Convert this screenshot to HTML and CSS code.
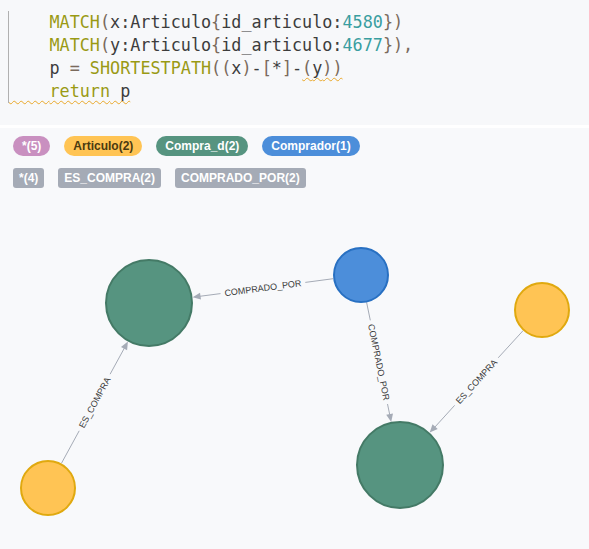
FILE: index.html
```html
<!DOCTYPE html>
<html lang="en">
<head>
  <meta charset="UTF-8" />
  <title>Query result</title>
  <link rel="stylesheet" href="styles.css">
</head>
<body>
  <div class="editor">
<pre class="code"><span class="sp">    </span><span class="kw">MATCH</span><span class="pn">(</span>x:Articulo<span class="pn">{</span>id_articulo:<span class="num">4580</span><span class="pn">})</span>
<span class="sp">    </span><span class="kw">MATCH</span><span class="pn">(</span>y:Articulo<span class="pn">{</span>id_articulo:<span class="num">4677</span><span class="pn">}),</span>
<span class="sp">    </span>p <span class="op">=</span> <span class="kw">SHORTESTPATH</span><span class="pn">((</span>x<span class="pn">)</span>-<span class="pn">[</span>*<span class="pn">]</span>-<span class="warn"><span class="pn">(</span>y<span class="pn">))</span></span>
<span class="warn"><span class="sp">    </span><span class="kw">return</span> p</span></pre>
  </div>

  <div class="legend">
    <div class="legend-row">
      <span class="pill pink">*(5)</span>
      <span class="pill yellow">Articulo(2)</span>
      <span class="pill green">Compra_d(2)</span>
      <span class="pill blue">Comprador(1)</span>
    </div>
    <div class="legend-row">
      <span class="tag">*(4)</span>
      <span class="tag">ES_COMPRA(2)</span>
      <span class="tag">COMPRADO_POR(2)</span>
    </div>
  </div>

  <div class="graph">
    <svg width="589" height="353" viewBox="0 196 589 353">
      <g class="rel">
        <line x1="333.2" y1="280.7" x2="305.3" y2="284.4" />
        <line x1="220.5" y1="295.6" x2="199" y2="298.4" />
        <polygon points="192.6,299.2 200.0,294.7 201.0,301.6" />
        <text x="262.9" y="290" dy="0.35em" transform="rotate(-7.5 262.9 290)">COMPRADO_POR</text>

        <line x1="366.6" y1="304.4" x2="370.3" y2="322.3" />
        <line x1="387.5" y1="406" x2="389.9" y2="417.5" />
        <polygon points="391.2,423.9 386.2,416.8 393.0,415.4" />
        <text x="378.9" y="364.2" dy="0.35em" transform="rotate(78.4 378.9 364.2)">COMPRADO_POR</text>

        <line x1="523.1" y1="332.6" x2="498.2" y2="359.8" />
        <line x1="454.6" y1="407.4" x2="434.5" y2="429.5" />
        <polygon points="429.7,434.6 432.5,426.3 437.7,431.1" />
        <text x="476.4" y="383.6" dy="0.35em" transform="rotate(-47.5 476.4 383.6)">ES_COMPRA</text>

        <line x1="61.4" y1="465.4" x2="79.2" y2="432.8" />
        <line x1="110.1" y1="376.2" x2="124.8" y2="349.3" />
        <polygon points="127.9,343.6 127.1,352.3 121.0,348.9" />
        <text x="94.7" y="404.5" dy="0.35em" transform="rotate(-61.4 94.7 404.5)">ES_COMPRA</text>
      </g>
      <circle class="node n-green" cx="149" cy="305" r="43" />
      <circle class="node n-blue" cx="361" cy="277" r="27" />
      <circle class="node n-yellow" cx="542" cy="312" r="27" />
      <circle class="node n-green" cx="400" cy="467" r="43" />
      <circle class="node n-yellow" cx="48" cy="490" r="27" />
    </svg>
  </div>
</body>
</html>
```

FILE: styles.css
```css
body { margin: 0; background: #f8f9fb; font-family: "Liberation Sans", Arial, sans-serif; color: #333; overflow: hidden; }

.editor { background: #f7f8fa; height: 125px; border-bottom: 3px solid #fff; overflow: hidden; }
.code {
  margin: 11px 0 0 8px;
  padding: 0;
  border-left: 1px solid #b0b0b0;
  font-family: "DejaVu Sans Mono", "Liberation Mono", monospace;
  font-size: 16.8px;
  line-height: 23px;
  color: #3d3d3d;
  width: 400px;
}
.kw { color: #9a9a14; }
.pn { color: #7a6a5c; }
.op { color: #7a6a5c; }
.num { color: #3a9ea0; }
.warn { text-decoration: underline wavy #e9a82a; text-decoration-thickness: 1px; text-underline-offset: 3px; }

.legend { padding: 8px 13px 6px; display: flex; flex-direction: column; gap: 12px; }
.legend-row { display: flex; gap: 14px; }
.pill {
  display: inline-block;
  height: 20px;
  line-height: 20px;
  padding: 0 9px;
  border-radius: 10px;
  font-size: 12px;
  font-weight: bold;
  color: #fff;
}
.pink { background: #c990c0; }
.yellow { background: #ffc454; color: #4a3a10; }
.green { background: #569480; }
.blue { background: #4c8eda; }
.tag {
  display: inline-block;
  height: 20px;
  line-height: 20px;
  padding: 0 6px;
  border-radius: 3px;
  background: #a5abb6;
  font-size: 12px;
  font-weight: bold;
  color: #fff;
}

.graph { height: 353px; }
.graph svg { display: block; }
.rel line { stroke: #a5abb6; stroke-width: 1; }
.rel polygon { fill: #a5abb6; }
.rel text { font-size: 9px; fill: #3a3a3a; text-anchor: middle; font-family: "Liberation Sans", Arial, sans-serif; }
.node { stroke-width: 2; }
.n-green { fill: #569480; stroke: #447a66; }
.n-blue { fill: #4c8eda; stroke: #2870c2; }
.n-yellow { fill: #ffc454; stroke: #e0a90f; }
```
